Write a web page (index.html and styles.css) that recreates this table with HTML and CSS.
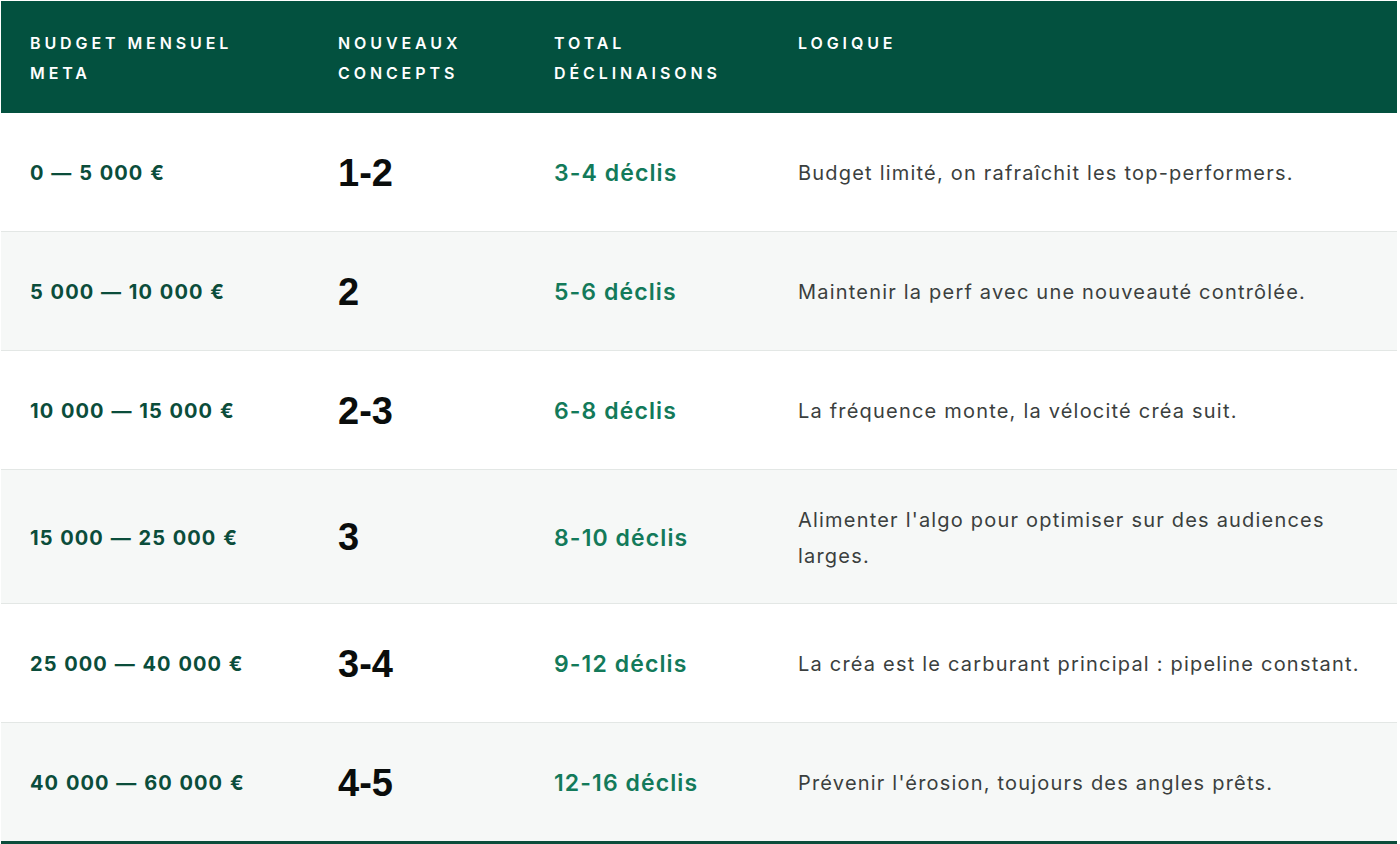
FILE: index.html
```html
<!DOCTYPE html>
<html lang="fr">
<head>
<meta charset="utf-8">
<title>Budget Meta</title>
<link rel="stylesheet" href="styles.css">
</head>
<body>
<div class="wrap">
<table class="grid">
  <colgroup>
    <col class="c1"><col class="c2"><col class="c3"><col class="c4">
  </colgroup>
  <thead>
    <tr>
      <th>Budget mensuel<br>Meta</th>
      <th>Nouveaux<br>concepts</th>
      <th>Total<br>déclinaisons</th>
      <th class="top">Logique</th>
    </tr>
  </thead>
  <tbody>
    <tr>
      <td class="budget">0 — 5 000 €</td>
      <td class="num">1-2</td>
      <td class="decl">3-4 déclis</td>
      <td class="logic">Budget limité, on rafraîchit les top-performers.</td>
    </tr>
    <tr class="alt">
      <td class="budget">5 000 — 10 000 €</td>
      <td class="num">2</td>
      <td class="decl">5-6 déclis</td>
      <td class="logic">Maintenir la perf avec une nouveauté contrôlée.</td>
    </tr>
    <tr>
      <td class="budget">10 000 — 15 000 €</td>
      <td class="num">2-3</td>
      <td class="decl">6-8 déclis</td>
      <td class="logic">La fréquence monte, la vélocité créa suit.</td>
    </tr>
    <tr class="alt">
      <td class="budget">15 000 — 25 000 €</td>
      <td class="num">3</td>
      <td class="decl">8-10 déclis</td>
      <td class="logic">Alimenter l'algo pour optimiser sur des audiences larges.</td>
    </tr>
    <tr>
      <td class="budget">25 000 — 40 000 €</td>
      <td class="num">3-4</td>
      <td class="decl">9-12 déclis</td>
      <td class="logic">La créa est le carburant principal : pipeline constant.</td>
    </tr>
    <tr class="alt last">
      <td class="budget">40 000 — 60 000 €</td>
      <td class="num">4-5</td>
      <td class="decl">12-16 déclis</td>
      <td class="logic">Prévenir l'érosion, toujours des angles prêts.</td>
    </tr>
  </tbody>
</table>
</div>
</body>
</html>
```

FILE: styles.css
```css
html, body {
  margin: 0;
  padding: 0;
  background: #ffffff;
}

.wrap {
  padding: 1px 3px 0 1px;
}

.grid {
  width: 1396px;
  border-collapse: collapse;
  table-layout: fixed;
  font-family: "Inter", "Liberation Sans", sans-serif;
}

.c1 { width: 308px; }
.c2 { width: 216px; }
.c3 { width: 244px; }
.c4 { width: 628px; }

.grid thead tr {
  background: #03513f;
}

.grid th {
  text-align: left;
  vertical-align: top;
  color: #ffffff;
  font-size: 16px;
  font-weight: 600;
  letter-spacing: 3.9px;
  text-transform: uppercase;
  line-height: 30px;
  padding: 27px 10px 25px 29px;
}

.grid tbody tr {
  border-bottom: 1px solid #e3e7e5;
}

.grid tbody tr.alt {
  background: #f6f8f7;
}

.grid tbody tr.last {
  border-bottom: 3px solid #0b4d3b;
}

.grid td {
  vertical-align: middle;
  padding: 31.5px 20px 29.5px 29px;
  line-height: 36px;
}

.budget {
  color: #0b4d3b;
  font-size: 20px;
  font-weight: 700;
  letter-spacing: 1.05px;
  word-spacing: 1px;
}

.num {
  color: #0a0d0c;
  font-family: "Liberation Sans", Arial, sans-serif;
  font-size: 38px;
  font-weight: 700;
  line-height: 57px !important;
}

.decl {
  color: #137a5a;
  font-size: 23px;
  font-weight: 600;
  letter-spacing: 1.1px;
}

.logic {
  color: #3b3f3e;
  font-size: 20px;
  font-weight: 400;
  letter-spacing: 1.2px;
}
```
